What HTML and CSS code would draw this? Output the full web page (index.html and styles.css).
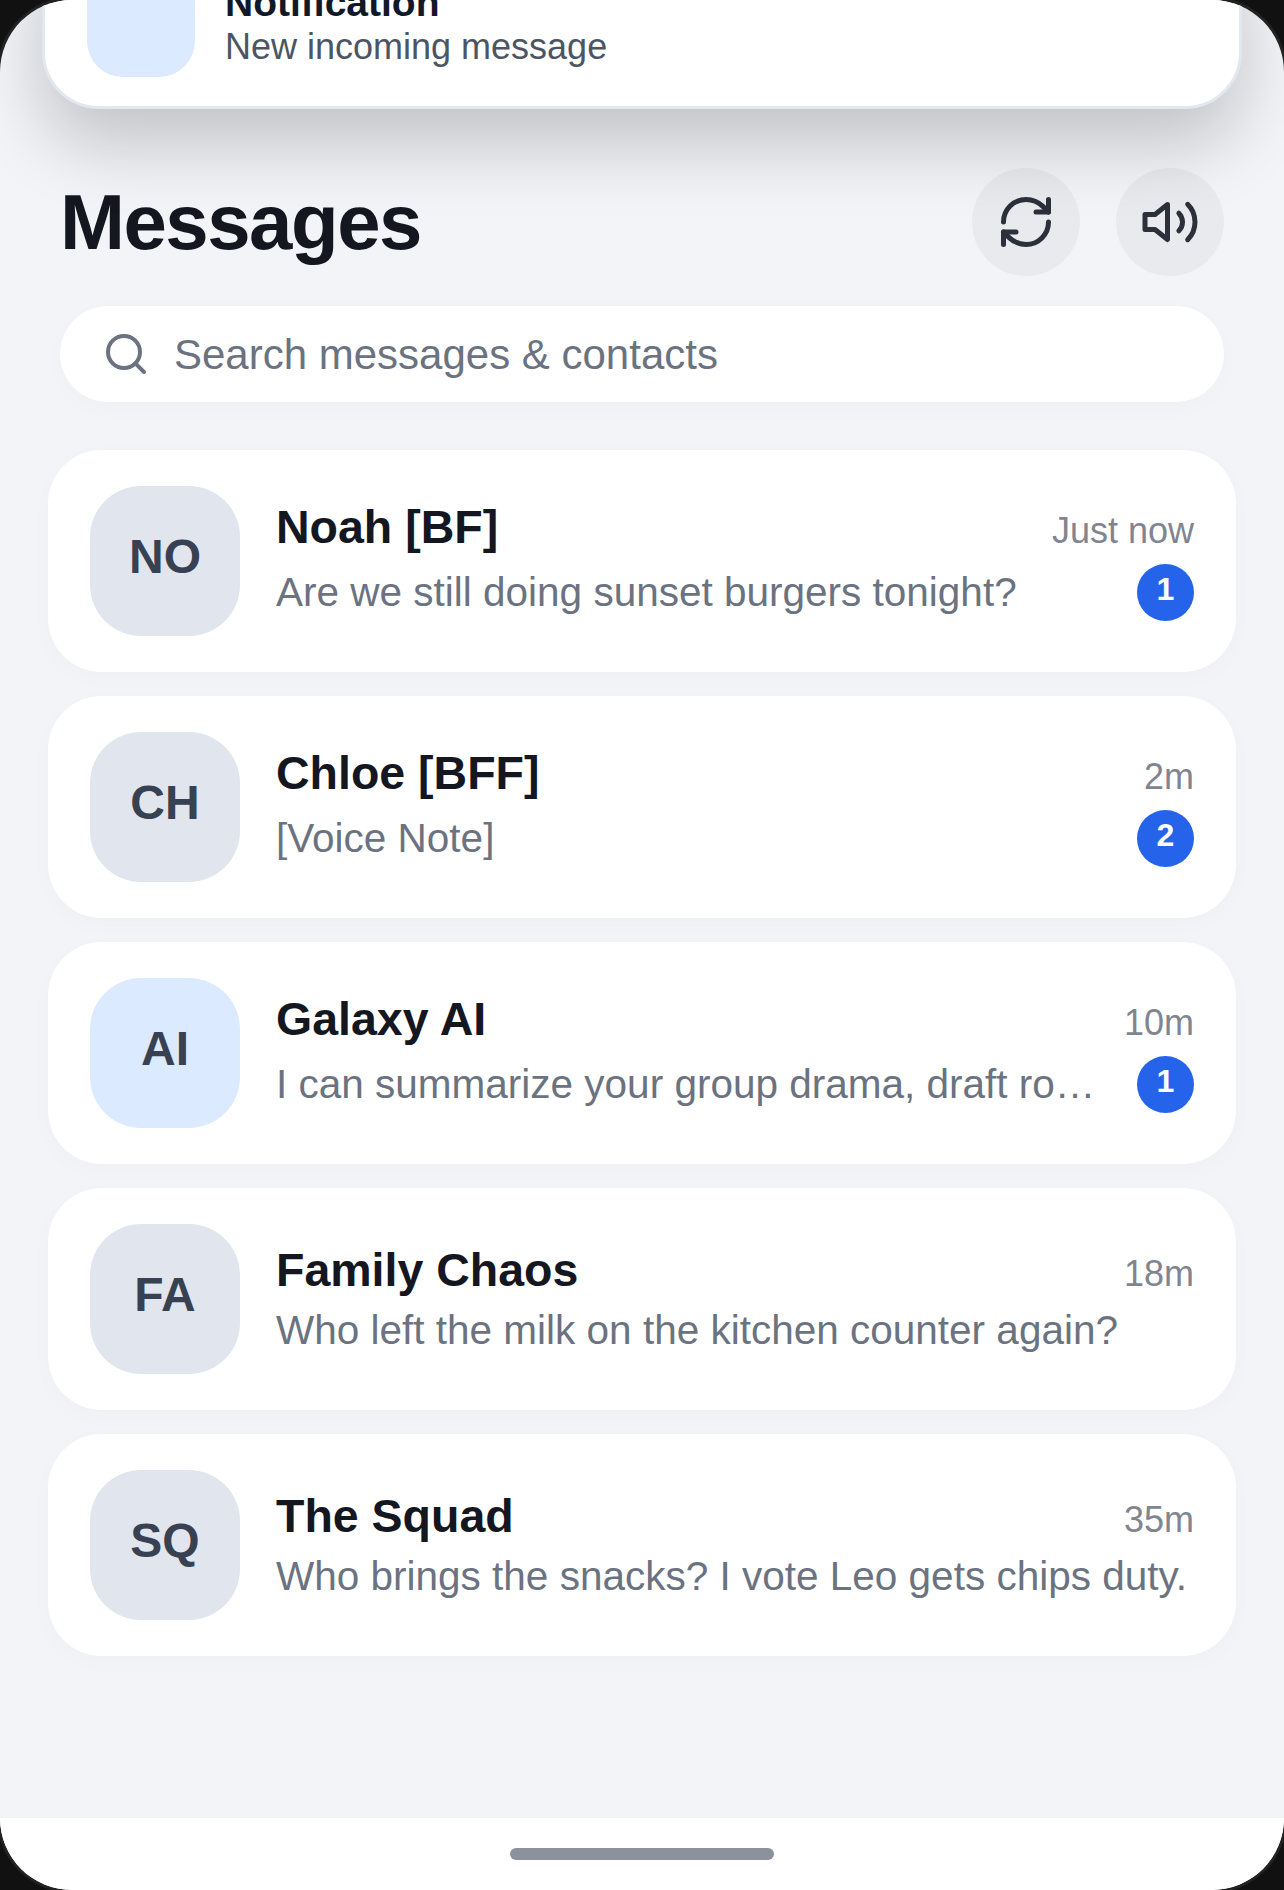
FILE: index.html
```html
<!DOCTYPE html>
<html lang="en">
<head>
    <meta charset="UTF-8">
    <meta name="viewport" content="width=device-width, initial-scale=1.0">
    <title>Messages</title>
    <link rel="stylesheet" href="styles.css">
</head>
<body>
    <div class="screen">
        <div class="notification">
            <div class="notification-thumb"></div>
            <div class="notification-text">
                <div class="notification-title">Notification</div>
                <div class="notification-body">New incoming message</div>
            </div>
        </div>

        <div class="main">
            <div class="header">
                <h1>Messages</h1>
                <div class="header-actions">
                    <button class="icon-btn">
                        <svg class="icon" viewBox="0 0 24 24"><path d="M3 12a9 9 0 0 1 9-9 9.75 9.75 0 0 1 6.74 2.74L21 8"/><path d="M21 3v5h-5"/><path d="M21 12a9 9 0 0 1-9 9 9.75 9.75 0 0 1-6.74-2.74L3 16"/><path d="M8 16H3v5"/></svg>
                    </button>
                    <button class="icon-btn">
                        <svg class="icon" viewBox="0 0 24 24"><polygon points="11 5 6 9 2 9 2 15 6 15 11 19 11 5"/><path d="M15.54 8.46a5 5 0 0 1 0 7.07"/><path d="M19.07 4.93a10 10 0 0 1 0 14.14"/></svg>
                    </button>
                </div>
            </div>

            <div class="search">
                <svg class="search-icon" viewBox="0 0 24 24"><circle cx="11" cy="11" r="8"/><path d="m21 21-4.3-4.3"/></svg>
                <span class="search-text">Search messages &amp; contacts</span>
            </div>

            <div class="list">
                <div class="card">
                    <div class="avatar">NO</div>
                    <div class="card-body">
                        <div class="card-top"><span class="name">Noah [BF]</span><span class="time">Just now</span></div>
                        <div class="card-bottom"><span class="preview">Are we still doing sunset burgers tonight?</span><span class="badge">1</span></div>
                    </div>
                </div>
                <div class="card">
                    <div class="avatar">CH</div>
                    <div class="card-body">
                        <div class="card-top"><span class="name">Chloe [BFF]</span><span class="time">2m</span></div>
                        <div class="card-bottom"><span class="preview">[Voice Note]</span><span class="badge">2</span></div>
                    </div>
                </div>
                <div class="card">
                    <div class="avatar avatar-ai">AI</div>
                    <div class="card-body">
                        <div class="card-top"><span class="name">Galaxy AI</span><span class="time">10m</span></div>
                        <div class="card-bottom"><span class="preview">I can summarize your group drama, draft ro…</span><span class="badge">1</span></div>
                    </div>
                </div>
                <div class="card">
                    <div class="avatar">FA</div>
                    <div class="card-body">
                        <div class="card-top"><span class="name">Family Chaos</span><span class="time">18m</span></div>
                        <div class="card-bottom"><span class="preview">Who left the milk on the kitchen counter again?</span></div>
                    </div>
                </div>
                <div class="card">
                    <div class="avatar">SQ</div>
                    <div class="card-body">
                        <div class="card-top"><span class="name">The Squad</span><span class="time">35m</span></div>
                        <div class="card-bottom"><span class="preview">Who brings the snacks? I vote Leo gets chips duty.</span></div>
                    </div>
                </div>
            </div>
        </div>

        <div class="home-bar"><div class="home-indicator"></div></div>
    </div>
</body>
</html>
```

FILE: styles.css
```css
* {
    box-sizing: border-box;
}
html, body {
    margin: 0;
    height: 100%;
    background: #111111;
    overflow: hidden;
}
body {
    font-family: "Liberation Sans", Arial, sans-serif;
}
.screen {
    position: relative;
    width: 1284px;
    height: 1890px;
    background: #f3f4f8;
    border-radius: 72px;
    box-shadow: 0 0 0 3px #222;
    overflow: hidden;
    display: flex;
    flex-direction: column;
}

/* notification sliding in from the top */
.notification {
    position: absolute;
    left: 42px;
    top: -71px;
    width: 1200px;
    height: 180px;
    background: #fff;
    border: 3px solid #e2e8f0;
    border-radius: 57px;
    box-shadow: 0 36px 72px rgba(0, 0, 0, 0.2);
    display: flex;
    align-items: center;
    gap: 30px;
    padding: 40px 42px 33px;
    z-index: 2;
}
.notification-thumb {
    width: 108px;
    height: 108px;
    border-radius: 36px;
    background: #dbeafe;
    flex-shrink: 0;
}
.notification-title {
    font-size: 39px;
    line-height: 48px;
    font-weight: bold;
    color: #111827;
}
.notification-body {
    font-size: 36px;
    line-height: 40px;
    color: #4b5563;
}

.main {
    flex: 1;
    padding: 168px 48px 0;
}
.header {
    display: flex;
    justify-content: space-between;
    align-items: center;
    padding: 0 12px;
}
h1 {
    margin: 0;
    font-size: 78px;
    line-height: 108px;
    font-weight: bold;
    letter-spacing: -1.5px;
    color: #14171f;
}
.header-actions {
    display: flex;
    gap: 36px;
}
.icon-btn {
    width: 108px;
    height: 108px;
    padding: 0;
    border: none;
    border-radius: 50%;
    background: #e9eaee;
    display: flex;
    align-items: center;
    justify-content: center;
}
.icon {
    width: 60px;
    height: 60px;
    fill: none;
    stroke: #2b303b;
    stroke-width: 2;
    stroke-linecap: round;
    stroke-linejoin: round;
}

.search {
    margin: 30px 12px 0;
    height: 96px;
    border-radius: 48px;
    background: #fff;
    box-shadow: 0 6px 24px rgba(0, 0, 0, 0.02);
    display: flex;
    align-items: center;
    gap: 24px;
    padding: 0 42px;
}
.search-icon {
    width: 48px;
    height: 48px;
    flex-shrink: 0;
    fill: none;
    stroke: #6b7280;
    stroke-width: 2;
    stroke-linecap: round;
    stroke-linejoin: round;
}
.search-text {
    font-size: 42px;
    padding-top: 2px;
    color: #6b7280;
}

.list {
    margin-top: 48px;
    display: flex;
    flex-direction: column;
    gap: 24px;
}
.card {
    height: 222px;
    background: #fff;
    border-radius: 54px;
    box-shadow: 0 6px 24px rgba(0, 0, 0, 0.02);
    display: flex;
    align-items: center;
    gap: 36px;
    padding: 36px 42px;
}
.avatar {
    width: 150px;
    height: 150px;
    border-radius: 51px;
    background: #e1e5ee;
    color: #374151;
    font-size: 48px;
    font-weight: bold;
    padding-bottom: 10px;
    display: flex;
    align-items: center;
    justify-content: center;
    flex-shrink: 0;
}
.avatar-ai {
    background: #dbeafe;
}
.card-body {
    flex: 1;
    min-width: 0;
}
.card-top, .card-bottom {
    display: flex;
    justify-content: space-between;
}
.card-top {
    align-items: baseline;
    margin-bottom: 10px;
}
.card-bottom {
    align-items: center;
}
.name {
    font-size: 46.5px;
    line-height: 52px;
    font-weight: bold;
    color: #14171f;
}
.time {
    font-size: 36px;
    line-height: 46px;
    color: #808590;
}
.preview {
    font-size: 40.5px;
    line-height: 47px;
    color: #6b7280;
    white-space: nowrap;
}
.badge {
    width: 57px;
    height: 57px;
    margin-left: 36px;
    border-radius: 50%;
    background: #2563eb;
    color: #fff;
    font-size: 32px;
    font-weight: bold;
    padding-bottom: 7px;
    display: flex;
    align-items: center;
    justify-content: center;
    flex-shrink: 0;
}

.home-bar {
    height: 72px;
    background: #fff;
    display: flex;
    justify-content: center;
    padding-top: 30px;
}
.home-indicator {
    width: 264px;
    height: 12px;
    border-radius: 6px;
    background: #8b919d;
}
```
